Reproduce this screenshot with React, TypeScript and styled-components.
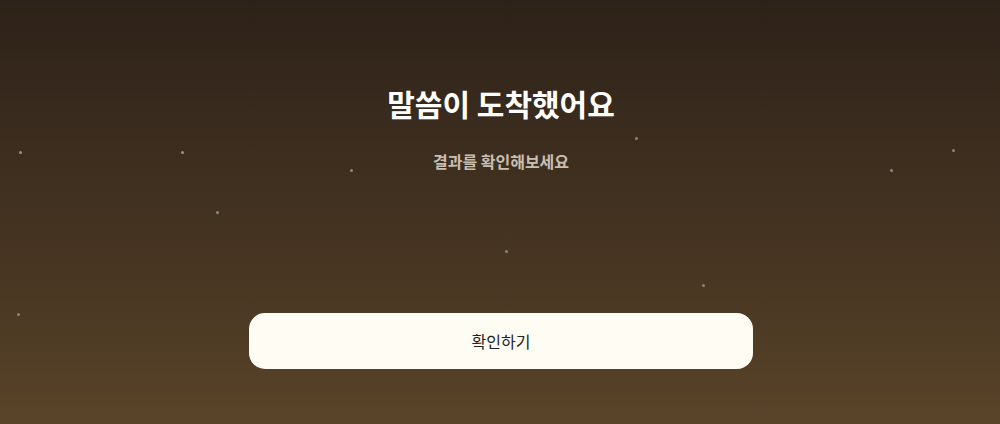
import React from 'react';
import styled, { createGlobalStyle } from 'styled-components';

const stars = [
  { x: 20, y: 152, o: 0.55 },
  { x: 182, y: 152, o: 0.55 },
  { x: 351, y: 170, o: 0.5 },
  { x: 217, y: 212, o: 0.5 },
  { x: 636, y: 138, o: 0.5 },
  { x: 506, y: 251, o: 0.45 },
  { x: 703, y: 285, o: 0.45 },
  { x: 891, y: 170, o: 0.5 },
  { x: 953, y: 150, o: 0.5 },
  { x: 18, y: 314, o: 0.45 },
];

const GlobalStyle = createGlobalStyle`
  html, body {
    margin: 0;
    padding: 0;
  }
  body {
    font-family: "Noto Sans CJK KR", "Noto Sans", sans-serif;
  }
`;

const App: React.FC = () => {
  return (
    <>
      <GlobalStyle />
      <Page>
        <StarField>
          {stars.map((s, i) => (
            <Star key={i} style={{ left: s.x - 1, top: s.y - 1, opacity: s.o }} />
          ))}
        </StarField>
        <Content>
          <Title>말씀이 도착했어요</Title>
          <Subtitle>결과를 확인해보세요</Subtitle>
          <ConfirmButton type="button">확인하기</ConfirmButton>
        </Content>
      </Page>
    </>
  );
};

export default App;

const Page = styled.div`
  position: relative;
  width: 100%;
  height: 100vh;
  min-height: 424px;
  overflow: hidden;
  background: linear-gradient(180deg, #2d2219 0%, #3c2d1e 35%, #4a3823 70%, #5a4429 100%);
`;

const StarField = styled.div`
  position: absolute;
  inset: 0;
  pointer-events: none;
`;

const Star = styled.span`
  position: absolute;
  width: 3px;
  height: 3px;
  border-radius: 50%;
  background: #e8e0d4;
`;

const Content = styled.main`
  position: relative;
  display: flex;
  flex-direction: column;
  align-items: center;
  padding: 83px 0 0 2px;
`;

const Title = styled.h1`
  margin: 0;
  font-size: 30px;
  line-height: 40px;
  font-weight: 700;
  color: #ffffff;
`;

const Subtitle = styled.p`
  margin: 27px 0 0;
  font-size: 16px;
  line-height: 22px;
  font-weight: 600;
  color: #c9bfb1;
`;

const ConfirmButton = styled.button`
  margin-top: 141px;
  width: 504px;
  height: 56px;
  border: none;
  border-radius: 16px;
  background: #fffcf3;
  color: #222222;
  font-family: inherit;
  font-size: 16px;
  font-weight: 400;
  cursor: pointer;
`;
